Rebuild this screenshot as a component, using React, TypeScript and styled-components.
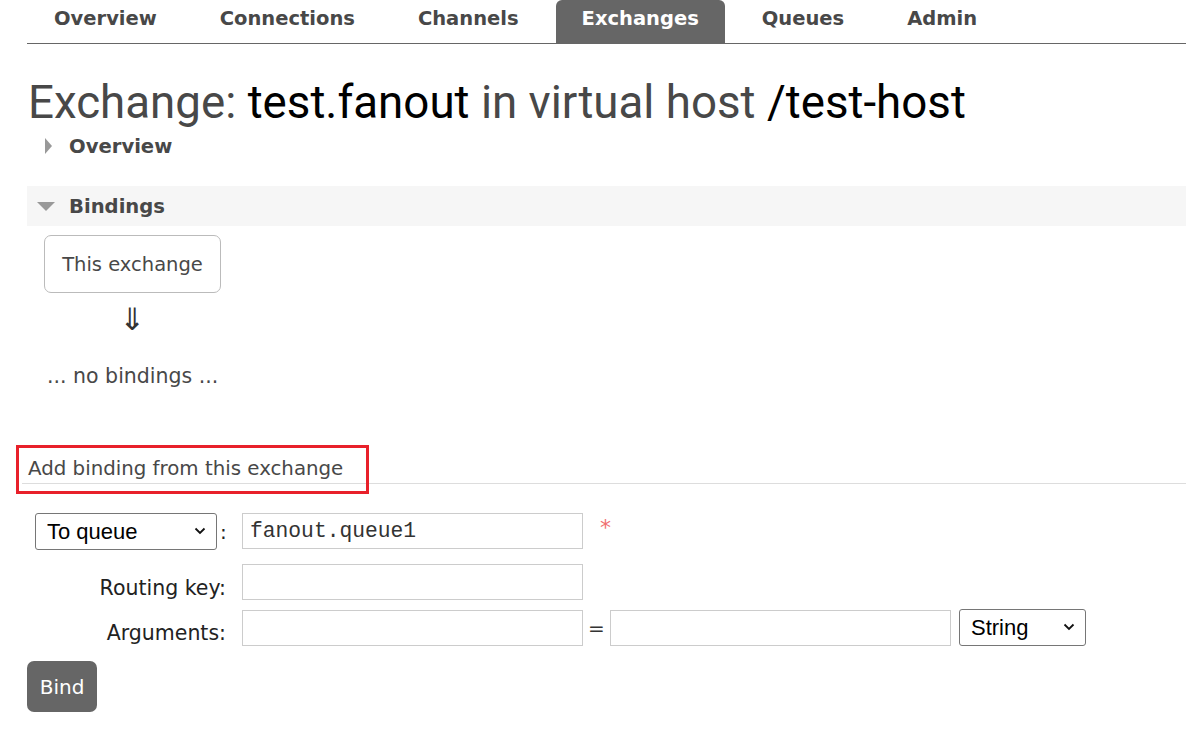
import React from "react";
import styled, { createGlobalStyle } from "styled-components";

const GlobalStyle = createGlobalStyle`
  html, body {
    margin: 0;
    padding: 0;
    background: #fff;
  }
  body {
    font-family: "DejaVu Sans", Verdana, sans-serif;
    color: #484848;
  }
`;

const Page = styled.div`
  width: 1186px;
  height: 739px;
  overflow: hidden;
  padding-left: 27px;
  box-sizing: border-box;
`;

const Nav = styled.ul`
  display: flex;
  margin: 0;
  padding: 0 0 0 1px;
  list-style: none;
  height: 43px;
  border-bottom: 1px solid #666;
`;

const Tab = styled.li<{ $active?: boolean }>`
  display: flex;
  align-items: center;
  height: 43px;
  box-sizing: border-box;
  padding: 0 26px 6px;
  margin-right: 11px;
  border-radius: 6px 6px 0 0;
  font-weight: bold;
  font-size: 19.5px;
  color: ${(p) => (p.$active ? "#fff" : "#484848")};
  background: ${(p) => (p.$active ? "#666" : "transparent")};
`;

const Title = styled.h1`
  margin: 34px 0 0 1px;
  font-family: Roboto, "Liberation Sans", sans-serif;
  font-weight: 400;
  font-size: 45.7px;
  line-height: 50px;
  color: #484848;
  white-space: nowrap;
`;

const Strong = styled.span`
  color: #000;
`;

const SectionHead = styled.div<{ $open?: boolean }>`
  display: flex;
  align-items: center;
  height: ${(p) => (p.$open ? "40px" : "36px")};
  margin-top: ${(p) => (p.$open ? "22px" : "0")};
  background: ${(p) => (p.$open ? "#f6f6f6" : "transparent")};
  font-weight: bold;
  font-size: 19.6px;
  color: #484848;
`;

const Arrow = styled.span<{ $open?: boolean }>`
  display: inline-block;
  width: 0;
  height: 0;
  ${(p) =>
    p.$open
      ? `
    margin: 0 14px 0 10px;
    border-left: 9px solid transparent;
    border-right: 9px solid transparent;
    border-top: 9px solid #999;
  `
      : `
    margin: 0 17px 0 18px;
    border-top: 8px solid transparent;
    border-bottom: 8px solid transparent;
    border-left: 7px solid #999;
  `}
`;

const SectionBody = styled.div`
  padding-left: 17px;
  display: flex;
  flex-direction: column;
  align-items: flex-start;
`;

const Node = styled.div`
  margin-top: 9px;
  width: 177px;
  height: 58px;
  box-sizing: border-box;
  border: 1px solid #bbb;
  border-radius: 7px;
  display: flex;
  align-items: center;
  justify-content: center;
  font-size: 19.5px;
  color: #484848;
`;

const DownArrow = styled.div`
  width: 177px;
  text-align: center;
  font-size: 31px;
  line-height: 40px;
  margin-top: 6px;
  color: #333;
`;

const NoBindings = styled.div`
  margin-top: 25px;
  margin-left: 3px;
  font-size: 20.5px;
  color: #484848;
`;

const AddHead = styled.div`
  position: relative;
  margin-top: 69px;
  margin-left: -5px;
  padding: 0 0 2px 6px;
  line-height: 24px;
  border-bottom: 1px solid #ddd;
  font-size: 19.8px;
  color: #484848;
`;

const Highlight = styled.div`
  position: absolute;
  left: -6px;
  top: -12px;
  width: 353px;
  height: 49px;
  border: 3px solid #e8202a;
  box-sizing: border-box;
`;

const Form = styled.div`
  margin-top: 29px;
  margin-left: 8px;
  display: grid;
  grid-template-columns: 191px auto;
  grid-template-rows: 51px 45px auto;
  justify-content: start;
  column-gap: 16px;
  align-items: start;
`;

const LabelCell = styled.div`
  height: 36px;
  padding-top: 11px;
  box-sizing: border-box;
  display: flex;
  justify-content: flex-end;
  align-items: center;
  font-size: 20.5px;
  color: #222;
`;

const FieldCell = styled.div`
  display: flex;
  align-items: center;
`;

const SelectWrap = styled.div`
  position: relative;
  display: inline-flex;
`;

const Select = styled.select<{ $w: number }>`
  appearance: none;
  width: ${(p) => p.$w}px;
  height: 37px;
  border: 1px solid #767676;
  border-radius: 3px;
  background: #fff;
  padding: 0 26px 0 11px;
  font-family: "Liberation Sans", Arial, sans-serif;
  font-size: 22px;
  color: #000;
  outline: none;
`;

const Chevron = styled.svg`
  position: absolute;
  right: 11px;
  top: 14px;
  width: 12px;
  height: 8px;
  pointer-events: none;
`;

const Colon = styled.span`
  margin-left: 3px;
  font-size: 20px;
  color: #222;
`;

const TextInput = styled.input<{ $mono?: boolean }>`
  width: 341px;
  height: 36px;
  box-sizing: border-box;
  border: 1px solid #ccc;
  padding: 0 7px;
  font-family: ${(p) =>
    p.$mono ? `"Liberation Mono", "Courier New", monospace` : `"DejaVu Sans", sans-serif`};
  font-size: 21.3px;
  color: #333;
  outline: none;
`;

const Required = styled.span`
  color: #f07070;
  font-size: 22px;
  margin-left: 17px;
  align-self: flex-start;
  margin-top: 2px;
`;

const Eq = styled.span`
  width: 27px;
  text-align: center;
  font-size: 20px;
  color: #333;
`;

const Spacer = styled.span`
  width: 8px;
`;

const Button = styled.button`
  margin-top: 15px;
  width: 70px;
  height: 51px;
  border: none;
  border-radius: 7px;
  background: #666;
  color: #fff;
  font-family: "DejaVu Sans", sans-serif;
  font-size: 20px;
`;

const tabs = ["Overview", "Connections", "Channels", "Exchanges", "Queues", "Admin"];

const Dropdown = ({ w, options }: { w: number; options: string[] }) => (
  <SelectWrap>
    <Select $w={w} defaultValue={options[0]}>
      {options.map((o) => (
        <option key={o} value={o}>
          {o}
        </option>
      ))}
    </Select>
    <Chevron viewBox="0 0 12 8">
      <path d="M1.5 1.5 L6 6 L10.5 1.5" fill="none" stroke="#111" strokeWidth="1.8" />
    </Chevron>
  </SelectWrap>
);

export default function App() {
  return (
    <>
      <GlobalStyle />
      <Page>
        <Nav>
          {tabs.map((t) => (
            <Tab key={t} $active={t === "Exchanges"}>
              {t}
            </Tab>
          ))}
        </Nav>
        <Title>
          Exchange: <Strong>test.fanout</Strong> in virtual host <Strong>/test-host</Strong>
        </Title>
        <SectionHead>
          <Arrow />
          Overview
        </SectionHead>
        <SectionHead $open>
          <Arrow $open />
          Bindings
        </SectionHead>
        <SectionBody>
          <Node>This exchange</Node>
          <DownArrow>⇓</DownArrow>
          <NoBindings>... no bindings ...</NoBindings>
        </SectionBody>
        <AddHead>
          Add binding from this exchange
          <Highlight />
        </AddHead>
        <Form>
          <FieldCell>
            <Dropdown w={182} options={["To queue", "To exchange"]} />
            <Colon>:</Colon>
          </FieldCell>
          <FieldCell>
            <TextInput $mono defaultValue="fanout.queue1" />
            <Required>*</Required>
          </FieldCell>
          <LabelCell>Routing key:</LabelCell>
          <FieldCell>
            <TextInput />
          </FieldCell>
          <LabelCell>Arguments:</LabelCell>
          <FieldCell>
            <TextInput />
            <Eq>=</Eq>
            <TextInput />
            <Spacer />
            <Dropdown w={127} options={["String", "Number", "Boolean", "List"]} />
          </FieldCell>
        </Form>
        <Button>Bind</Button>
      </Page>
    </>
  );
}
